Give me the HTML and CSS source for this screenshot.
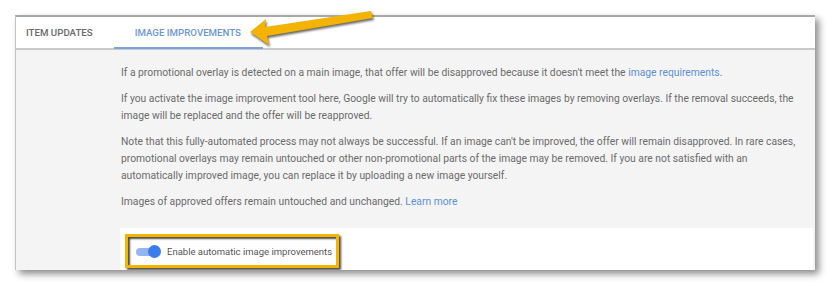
FILE: index.html
```html
<!DOCTYPE html>
<html>
<head>
<meta charset="utf-8">
<link rel="stylesheet" href="styles.css">
</head>
<body>
<div class="frame">
  <div class="tabbar">
    <div class="tab">ITEM UPDATES</div>
    <div class="tab active">IMAGE IMPROVEMENTS</div>
  </div>
  <div class="content">
    <div class="text">
      <p>If a promotional overlay is detected on a main image, that offer will be disapproved because it doesn't meet the <a>image requirements</a>.</p>
      <p>If you activate the image improvement tool here, Google will try to automatically fix these images by removing overlays. If the removal succeeds, the<br>image will be replaced and the offer will be reapproved.</p>
      <p>Note that this fully-automated process may not always be successful. If an image can't be improved, the offer will remain disapproved. In rare cases,<br>promotional overlays may remain untouched or other non-promotional parts of the image may be removed. If you are not satisfied with an<br>automatically improved image, you can replace it by uploading a new image yourself.</p>
      <p>Images of approved offers remain untouched and unchanged. <a>Learn more</a></p>
    </div>
    <div class="card">
      <div class="highlight">
        <span class="toggle"><span class="track"></span><span class="knob"></span></span>
        <span class="label">Enable automatic image improvements</span>
      </div>
    </div>
  </div>
</div>
<svg class="arrow" width="140" height="40" viewBox="240 6 140 40">
  <polygon points="250,32 266,19 265,27 371,11 373,18 267,36 269,45" fill="#f5b301"/>
</svg>
</body>
</html>
```
FILE: styles.css
```css
html, body {
  margin: 0;
  padding: 0;
  background: #ffffff;
}
body {
  position: relative;
  width: 840px;
  height: 294px;
  overflow: hidden;
  font-family: Roboto, "Liberation Sans", sans-serif;
}
.frame {
  margin: 15px 0 0 15px;
  width: 799px;
  height: 253px;
  border-top: 2px solid #a8a8a8;
  border-left: 1px solid #c4c4c4;
  background: #f4f4f4;
  box-shadow: 4px 4px 7px rgba(0,0,0,0.45);
  overflow: hidden;
  display: flex;
  flex-direction: column;
}
.tabbar {
  height: 31px;
  background: #ffffff;
  border-bottom: 2px solid #c9c9c9;
  display: flex;
  flex-shrink: 0;
}
.tab {
  font-size: 9.7px;
  font-weight: 500;
  color: #6a6a6a;
  line-height: 31px;
  padding: 0 21px 0 10px;
}
.tab.active {
  color: #6b98d8;
  padding: 0 22px 0 21px;
  border-bottom: 2px solid #7aa2dc;
  height: 30px;
  line-height: 31px;
}
.content {
  flex: 1;
  display: flex;
  flex-direction: column;
}
.text {
  padding: 14px 0 0 105px;
  color: #6b6b6b;
  font-size: 10.3px;
  line-height: 17px;
  white-space: nowrap;
}
.text p {
  margin: 0 0 9px 0;
}
.text a {
  color: #5b8fd9;
}
.card {
  margin: 9px 2px 0 104px;
  background: #ffffff;
  flex: 1;
  padding: 6px 0 0 5px;
}
.highlight {
  width: 200px;
  height: 28px;
  border: 3px solid #f5b400;
  box-shadow: 2px 2px 2px rgba(0,0,0,0.7), inset 2px 2px 2px rgba(0,0,0,0.7);
  display: flex;
  align-items: center;
  gap: 6px;
  padding-left: 8px;
}
.toggle {
  position: relative;
  width: 25px;
  height: 13px;
  display: inline-block;
}
.track {
  position: absolute;
  left: 0;
  top: 3px;
  width: 22px;
  height: 8px;
  border-radius: 4px;
  background: #93b6f2;
}
.knob {
  position: absolute;
  right: 0;
  top: 0;
  width: 13px;
  height: 13px;
  border-radius: 50%;
  background: #3b7ded;
}
.label {
  font-size: 9.5px;
  color: #555555;
  white-space: nowrap;
}
.arrow {
  position: absolute;
  left: 240px;
  top: 6px;
  filter: drop-shadow(1px 2px 1px rgba(0,0,0,0.6));
}
```
